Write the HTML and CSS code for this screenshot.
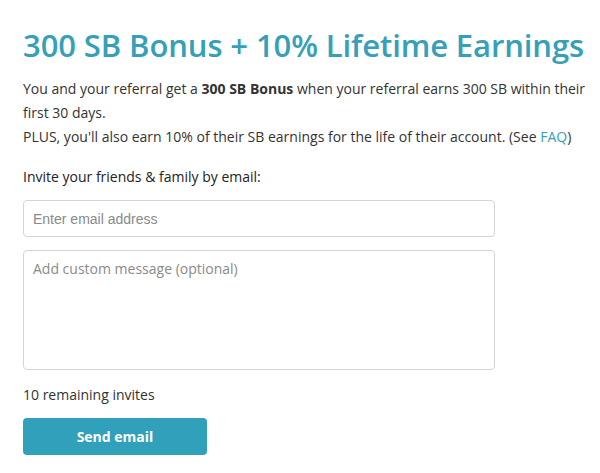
FILE: index.html
```html
<!DOCTYPE html>
<html>
<head>
<meta charset="utf-8">
<link rel="stylesheet" href="styles.css">
</head>
<body>
<div class="page">
  <h1 class="title">300 SB Bonus + 10% Lifetime Earnings</h1>
  <p class="intro">You and your referral get a <strong>300 SB Bonus</strong> when your referral earns 300 SB within their first 30 days.<br>PLUS, you'll also earn 10% of their SB earnings for the life of their account. (See <a class="link" href="#">FAQ</a>)</p>
  <form class="form">
    <label class="label">Invite your friends &amp; family by email:</label>
    <input class="field email" type="text" placeholder="Enter email address">
    <textarea class="field message" placeholder="Add custom message (optional)"></textarea>
    <div class="remaining">10 remaining invites</div>
    <button class="send" type="button">Send email</button>
  </form>
</div>
</body>
</html>
```
FILE: styles.css
```css
html, body {
  margin: 0;
  padding: 0;
  background: #fff;
}
.page {
  padding: 25px 0 0 23px;
  font-family: "Open Sans", sans-serif;
  color: #333;
}
.title {
  margin: 0;
  font-size: 31px;
  line-height: 40px;
  font-weight: 600;
  letter-spacing: -0.1px;
  color: #35a0b8;
}
.intro {
  margin: 12px 0 0;
  font-size: 14px;
  line-height: 24px;
  width: 570px;
}
.intro strong {
  font-weight: 700;
}
.link {
  color: #35a0b8;
  text-decoration: none;
}
.form {
  display: flex;
  flex-direction: column;
  align-items: flex-start;
  margin-top: 17px;
}
.label {
  font-size: 14px;
  line-height: 22px;
  color: #222;
}
.field {
  box-sizing: border-box;
  width: 472px;
  border: 1px solid #d5d5d5;
  border-radius: 4px;
  padding: 0 9px;
  margin: 0;
  font-size: 14px;
  color: #333;
  outline: none;
}
.field::placeholder {
  color: #8a8a8a;
}
.email {
  margin-top: 12px;
  height: 37px;
  font-family: "Liberation Sans", Arial, sans-serif;
}
.message {
  margin-top: 13px;
  height: 120px;
  padding-top: 8px;
  resize: none;
  font-family: "Open Sans", sans-serif;
  line-height: 20px;
}
.remaining {
  margin-top: 15px;
  font-size: 14px;
  line-height: 20px;
  color: #333;
}
.send {
  margin-top: 13px;
  width: 184px;
  height: 37px;
  border: none;
  border-radius: 4px;
  background: #31a0ba;
  color: #fff;
  font-family: "Open Sans", sans-serif;
  font-size: 14px;
  font-weight: 700;
  cursor: pointer;
}
```
